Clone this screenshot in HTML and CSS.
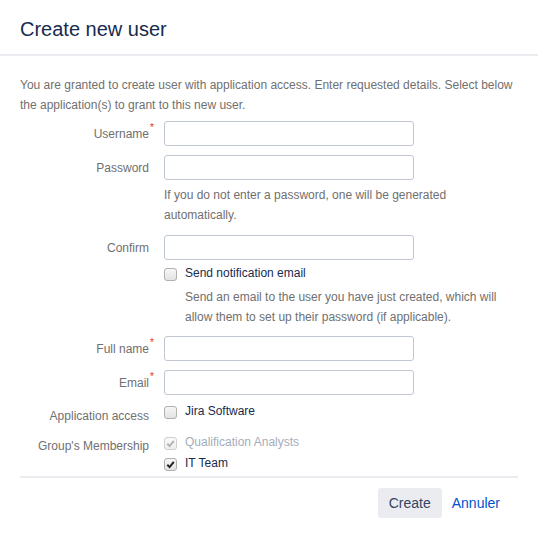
FILE: index.html
```html
<!DOCTYPE html>
<html>
<head>
<meta charset="utf-8">
<title>Create new user</title>
<link rel="stylesheet" href="styles.css">
</head>
<body>
<div class="dialog">
  <header class="dlg-header">
    <h2 class="dlg-title">Create new user</h2>
  </header>
  <div class="dlg-body">
    <p class="intro">You are granted to create user with application access. Enter requested details. Select below the application(s) to grant to this new user.</p>

    <div class="field f-user">
      <label class="lbl">Username<span class="req">*</span></label>
      <div class="ctl"><input class="text" type="text"></div>
    </div>

    <div class="field f-pass">
      <label class="lbl">Password</label>
      <div class="ctl">
        <input class="text" type="password">
        <div class="help">If you do not enter a password, one will be generated automatically.</div>
      </div>
    </div>

    <div class="field f-confirm">
      <label class="lbl">Confirm</label>
      <div class="ctl">
        <input class="text" type="password">
        <div class="check check-notify">
          <span class="box"></span>
          <span class="check-label">Send notification email</span>
        </div>
        <div class="help help-indent">Send an email to the user you have just created, which will allow them to set up their password (if applicable).</div>
      </div>
    </div>

    <div class="field f-full">
      <label class="lbl">Full name<span class="req">*</span></label>
      <div class="ctl"><input class="text" type="text"></div>
    </div>

    <div class="field f-email">
      <label class="lbl">Email<span class="req">*</span></label>
      <div class="ctl"><input class="text" type="text"></div>
    </div>

    <div class="field f-app">
      <label class="lbl lbl-check">Application access</label>
      <div class="ctl">
        <div class="check">
          <span class="box"></span>
          <span class="check-label">Jira Software</span>
        </div>
      </div>
    </div>

    <div class="field f-group">
      <label class="lbl lbl-check2">Group's Membership</label>
      <div class="ctl">
        <div class="check disabled">
          <span class="box"><svg viewBox="0 0 13 13" width="13" height="13"><path d="M3.3 6.8 L5.6 9.1 L9.8 3.9" fill="none" stroke="#b3b3b3" stroke-width="2"/></svg></span>
          <span class="check-label">Qualification Analysts</span>
        </div>
        <div class="check">
          <span class="box"><svg viewBox="0 0 13 13" width="13" height="13"><path d="M3.3 6.8 L5.6 9.1 L9.8 3.9" fill="none" stroke="#222" stroke-width="2"/></svg></span>
          <span class="check-label">IT Team</span>
        </div>
      </div>
    </div>
  </div>
  <footer class="dlg-footer">
    <button class="btn" type="button">Create</button>
    <a class="link" href="#">Annuler</a>
  </footer>
</div>
</body>
</html>
```

FILE: styles.css
```css
html, body {
  margin: 0;
  padding: 0;
  background: #fff;
}
body {
  font-family: "Liberation Sans", Arial, sans-serif;
  font-size: 12px;
  color: #172b4d;
}
.dialog {
  width: 538px;
}
.dlg-header {
  height: 54px;
  border-bottom: 2px solid #ebecf0;
  display: flex;
  align-items: center;
  padding: 0 20px;
}
.dlg-title {
  margin: 0;
  font-size: 20px;
  font-weight: normal;
  line-height: 24px;
  color: #172b4d;
  padding-top: 3px;
}
.dlg-body {
  padding: 19px 20px 0 20px;
}
.intro {
  margin: 0 0 6px 0;
  line-height: 20px;
  color: #707070;
}
.field {
  display: grid;
  grid-template-columns: 130px 1fr;
  column-gap: 14px;
  align-items: start;
}
.lbl {
  position: relative;
  text-align: right;
  padding-right: 1px;
  line-height: 20px;
  padding-top: 3px;
  color: #707070;
  white-space: nowrap;
}
.req {
  position: absolute;
  right: -4px;
  top: 0;
  color: #de350b;
  font-size: 10px;
  line-height: 14px;
}
.text {
  display: block;
  box-sizing: border-box;
  width: 250px;
  height: 25px;
  margin: 0;
  border: 1px solid #c1c7d0;
  border-radius: 3px;
  background: #fff;
  font: inherit;
  padding: 0 6px;
}
.help {
  line-height: 20px;
  color: #707070;
}
.f-user { margin-bottom: 9px; }
.f-pass .help { margin-top: 5px; }
.f-pass { margin-bottom: 10px; }
.check {
  display: flex;
  align-items: center;
  height: 20px;
}
.check-notify { margin-top: 3px; }
.help-indent {
  margin-top: 4px;
  padding-left: 21px;
}
.f-confirm { margin-bottom: 9px; }
.f-full { margin-bottom: 9px; }
.f-app { margin-top: 6px; margin-bottom: 6px; }
.lbl-check { padding-top: 5px; }
.lbl-check2 { padding-top: 4px; }
.f-group .check + .check { margin-top: 1px; }
.box {
  box-sizing: border-box;
  width: 13px;
  height: 13px;
  border: 1px solid #b0b0b0;
  border-radius: 3px;
  background: linear-gradient(#f7f7f7, #e2e2e2);
  margin-right: 8px;
  position: relative;
  flex: none;
  margin-top: 2px;
}
.box svg {
  position: absolute;
  left: -1px;
  top: -1px;
}
.check-label {
  color: #172b4d;
  line-height: 20px;
}
.disabled .box {
  border-color: #d0d0d0;
  background: linear-gradient(#fafafa, #eeeeee);
}
.disabled .check-label {
  color: #a5adba;
}
.dlg-footer {
  margin: 3px 20px 0 20px;
  border-top: 2px solid #ebecf0;
  padding: 10px 18px 27px 0;
  display: flex;
  justify-content: flex-end;
  align-items: center;
}
.btn {
  height: 30px;
  width: 64px;
  border: none;
  border-radius: 3px;
  background: #ebecf0;
  color: #344563;
  font-family: "Liberation Sans", Arial, sans-serif;
  font-size: 14px;
  padding: 0;
  margin-right: 10px;
}
.link {
  color: #0052cc;
  text-decoration: none;
  font-size: 14px;
  line-height: 30px;
}
```
